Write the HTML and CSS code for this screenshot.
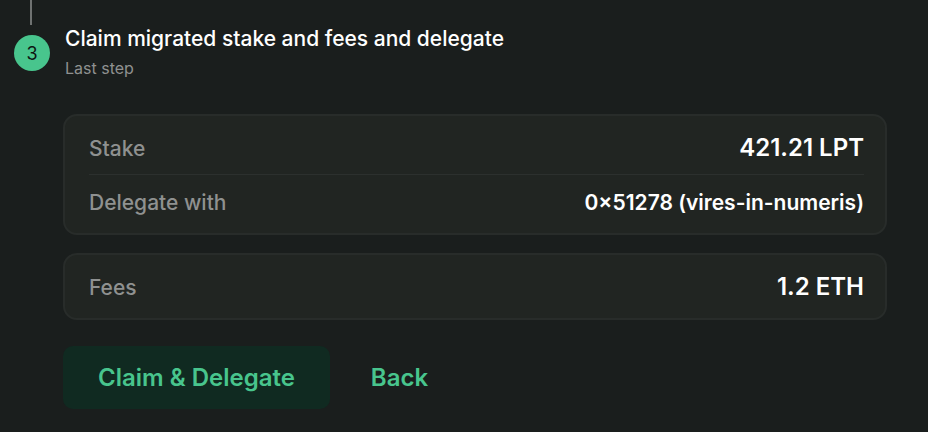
FILE: index.html
```html
<!DOCTYPE html>
<html lang="en">
<head>
<meta charset="utf-8">
<title>Migrate stake</title>
<link rel="stylesheet" href="styles.css">
</head>
<body>
<main class="stepper">
  <div class="connector"></div>
  <header class="step">
    <span class="step-number">3</span>
    <div class="step-text">
      <h1 class="step-title">Claim migrated stake and fees and delegate</h1>
      <p class="step-note">Last step</p>
    </div>
  </header>
  <section class="content">
    <dl class="card">
      <div class="row">
        <dt>Stake</dt>
        <dd>421.21 LPT</dd>
      </div>
      <div class="row">
        <dt>Delegate with</dt>
        <dd class="address">0×51278 (vires-in-numeris)</dd>
      </div>
    </dl>
    <dl class="card">
      <div class="row">
        <dt>Fees</dt>
        <dd>1.2 ETH</dd>
      </div>
    </dl>
    <div class="actions">
      <button class="button primary" type="button">Claim &amp; Delegate</button>
      <button class="button" type="button">Back</button>
    </div>
  </section>
</main>
</body>
</html>
```

FILE: styles.css
```css
* {
  box-sizing: border-box;
}

body {
  margin: 0;
  min-height: 100vh;
  background: #1a1e1d;
  color: #fff;
  font-family: Inter, "Liberation Sans", sans-serif;
}

h1, p, dl, dd {
  margin: 0;
}

.stepper {
  padding: 0 41px 22px 14px;
}

.connector {
  width: 2px;
  height: 25px;
  margin-left: 16px;
  background: #6f7271;
}

.step {
  display: flex;
  gap: 15px;
}

.step-number {
  display: flex;
  align-items: center;
  justify-content: center;
  width: 36px;
  height: 36px;
  margin-top: 10px;
  border-radius: 50%;
  background: #48c58d;
  color: #0e1512;
  font-size: 18px;
}

.step-title {
  font-size: 21px;
  line-height: 28px;
  font-weight: 500;
}

.step-note {
  margin-top: 3px;
  color: #8f9190;
  font-size: 16px;
  line-height: 24px;
}

.content {
  display: flex;
  flex-direction: column;
  gap: 18px;
  margin: 34px 0 0 49px;
}

.card {
  padding: 4px 21px 5px 24px;
  border: 2px solid #282c2a;
  border-radius: 14px;
  background: #212522;
}

.row {
  display: flex;
  align-items: baseline;
  justify-content: space-between;
  padding: 13px 0 10px;
  font-size: 21px;
  line-height: 30px;
}

.row + .row {
  border-top: 1px solid #2c302e;
}

dt {
  color: #8f9190;
  font-weight: 500;
}

dd {
  font-size: 24px;
  font-weight: 600;
}

.address {
  font-size: 21px;
}

.actions {
  display: flex;
  gap: 6px;
  margin-top: 8px;
}

.button {
  height: 63px;
  padding: 0 35px;
  border: 0;
  border-radius: 10px;
  background: transparent;
  color: #48c58d;
  font: inherit;
  font-size: 24px;
  font-weight: 600;
}

.primary {
  background: #102a21;
}
```
